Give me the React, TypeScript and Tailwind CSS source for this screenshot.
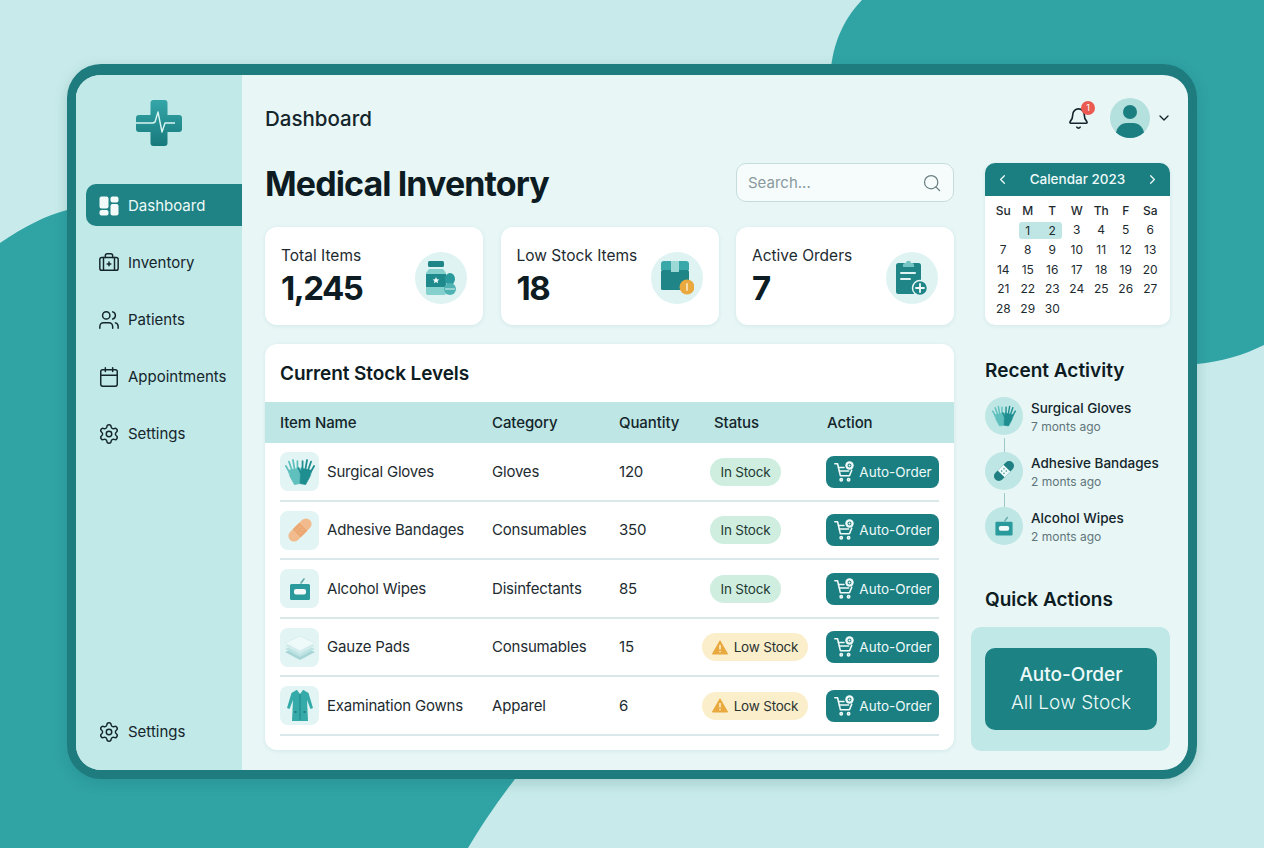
import { Bell, BriefcaseMedical, Calendar, ChevronDown, ChevronLeft, ChevronRight, Search, Settings, Users } from 'lucide-react';
import type { ReactNode } from 'react';

function Logo() {
  return (
    <svg width="46" height="46" viewBox="0 0 46 46" fill="none">
      <defs>
        <linearGradient id="logoFill" x1="0" y1="0" x2="0" y2="1">
          <stop offset="0" stopColor="#35a6a8" />
          <stop offset="1" stopColor="#17797c" />
        </linearGradient>
      </defs>
      <path
        d="M14.5 3a3 3 0 0 1 3-3h11a3 3 0 0 1 3 3v12H43a3 3 0 0 1 3 3v11a3 3 0 0 1-3 3H31.500v11a3 3 0 0 1-3 3h-11a3 3 0 0 1-3-3V32H3a3 3 0 0 1-3-3V18a3 3 0 0 1 3-3h11.500z"
        fill="url(#logoFill)"
      />
      <path d="M0 23h17l2-1 3-10 4 20 3-9h10" stroke="#d9f5f3" strokeWidth="1.4" strokeLinejoin="round" />
    </svg>
  );
}

function DashboardIcon() {
  return (
    <svg width="20" height="20" viewBox="0 0 20 20" fill="#f2fbfa">
      <rect x="0.500" y="0.500" width="9" height="12" rx="2" />
      <rect x="11.500" y="0.500" width="8" height="6" rx="2" />
      <rect x="0.500" y="14" width="9" height="5.500" rx="2" />
      <rect x="11.500" y="8" width="8" height="11.500" rx="2" />
    </svg>
  );
}

function GlovesIcon({ size = 28 }: { size?: number }) {
  const hand = (color: string, transform: string) => (
    <g stroke={color} strokeWidth="1.900" strokeLinecap="round" fill={color} transform={transform}>
      <path d="M5 15 2.500 8M8 13 6.500 4M11 13V3M14 14l1.500-9M15 18l3.500-5" fill="none" />
      <path d="M4.500 13h10.500l.500 6-1.500 10H8L5 20z" strokeWidth="0.800" />
    </g>
  );
  return (
    <svg width={size} height={size} viewBox="0 0 32 32">
      {hand('#5fc0be', 'translate(2 0) rotate(-10 10 29)')}
      {hand('#1f8e90', 'translate(30 0) scale(-1 1) rotate(-10 10 29)')}
    </svg>
  );
}

function BandageIcon({ size = 30, body = '#f2bb8d', pad = '#eba873' }: { size?: number; body?: string; pad?: string }) {
  return (
    <svg width={size} height={size} viewBox="0 0 32 32">
      <g transform="rotate(-45 16 16)">
        <rect x="1" y="10" width="30" height="12" rx="6" fill={body} />
        <rect x="11" y="10" width="10" height="12" fill={pad} />
        <circle cx="14" cy="14" r="0.800" fill={body} />
        <circle cx="18" cy="14" r="0.800" fill={body} />
        <circle cx="14" cy="18" r="0.800" fill={body} />
        <circle cx="18" cy="18" r="0.800" fill={body} />
      </g>
    </svg>
  );
}

function WipesIcon({ size = 28 }: { size?: number }) {
  return (
    <svg width={size} height={size} viewBox="0 0 28 28" fill="none">
      <path d="M15 8l3-4" stroke="#5fa8a8" strokeWidth="1.600" strokeLinecap="round" />
      <rect x="4" y="9" width="20" height="16" rx="1.500" fill="#2b9a9c" />
      <rect x="8" y="14" width="12" height="5.500" rx="2" fill="#f2fbfa" />
    </svg>
  );
}

function GauzeIcon() {
  return (
    <svg width="32" height="32" viewBox="0 0 32 32">
      <path d="M16 15 31 21 16 29 1 21z" fill="#a7d5d6" />
      <path d="M16 12 31 18 16 26 1 18z" fill="#bfe2e3" />
      <path d="M16 9 31 15 16 23 1 15z" fill="#d0ecec" />
      <path d="M16 5 31 12 16 20 1 12z" fill="#eef9f9" stroke="#cfe6e6" strokeWidth="0.500" />
    </svg>
  );
}

function GownIcon() {
  return (
    <svg width="28" height="34" viewBox="0 0 28 34">
      <path d="M10.500 1h7l5 3 4.500 15-2.500 1-3.500-9 1 21H6l1-21-3.500 9L1 19 5.500 4z" fill="#35aaa9" />
      <path d="M11 1l3 4 3-4z" fill="#e2f4f3" />
      <path d="M14 5v26" stroke="#1c8284" strokeWidth="0.800" />
      <path d="M8.500 23h2M17.500 23h2" stroke="#1c6f72" strokeWidth="1.300" />
    </svg>
  );
}

function BottleIcon() {
  return (
    <svg width="34" height="36" viewBox="0 0 34 36">
      <rect x="4" y="1" width="16" height="6" rx="1.500" fill="#1f8587" />
      <path d="M5 9h14l3 4v20a2 2 0 0 1-2 2H4a2 2 0 0 1-2-2V13z" fill="#83d0cd" />
      <rect x="2" y="14" width="20" height="13" fill="#1f8a8c" />
      <path d="M12 17l1 2.200 2.300.2-1.700 1.500.5 2.300-2.100-1.200-2.100 1.200.5-2.300-1.700-1.500 2.300-.2z" fill="#eef9f9" />
      <ellipse cx="26" cy="19" rx="5" ry="6" fill="#2b9a9c" />
      <ellipse cx="26" cy="29" rx="6" ry="6" fill="#4fb3b3" />
      <path d="M21 29h10" stroke="#d7f1f0" strokeWidth="1" />
    </svg>
  );
}

function BoxIcon() {
  return (
    <svg width="34" height="36" viewBox="0 0 34 36">
      <path d="M4 1h22a3 3 0 0 1 3 3v6H1V4a3 3 0 0 1 3-3z" fill="#3aa7a8" />
      <rect x="1" y="10" width="28" height="20" rx="1.500" fill="#1f8587" />
      <rect x="11" y="1" width="8" height="11" fill="#9bd8d6" />
      <circle cx="27" cy="27" r="7.500" fill="#e9a93f" />
      <rect x="26.200" y="23" width="1.600" height="8" rx="0.800" fill="#fbe9c2" />
    </svg>
  );
}

function ClipboardIcon() {
  return (
    <svg width="34" height="38" viewBox="0 0 34 38">
      <rect x="1" y="4" width="25" height="31" rx="2.500" fill="#1f8587" />
      <path d="M8 6c0-2 2-2 3-2 0-3 5-3 5 0 1 0 3 0 3 2v2H8z" fill="#74c5c4" />
      <path d="M6 14h14M6 20h9" stroke="#dff4f3" strokeWidth="2" strokeLinecap="round" />
      <circle cx="25" cy="29" r="7.500" fill="#1f8587" stroke="#e2f4f3" strokeWidth="1.500" />
      <path d="M25 25v8M21 29h8" stroke="#f2fbfa" strokeWidth="1.800" strokeLinecap="round" />
    </svg>
  );
}

function CartIcon() {
  return (
    <svg width="22" height="22" viewBox="0 0 24 24" fill="none" stroke="#f2fbfa" strokeWidth="1.700" strokeLinecap="round" strokeLinejoin="round">
      <path d="M2 3h3l3 13h10l2.400-6" />
      <path d="M6 7h6M7 11h10" />
      <circle cx="9" cy="20.500" r="1.300" />
      <circle cx="17" cy="20.500" r="1.300" />
      <circle cx="18" cy="5" r="4.600" fill="#f2fbfa" stroke="none" />
      <circle cx="18" cy="5" r="1.600" fill="none" stroke="#1b7f82" strokeWidth="1.100" />
    </svg>
  );
}

function WarnIcon() {
  return (
    <svg width="16" height="15" viewBox="0 0 16 15">
      <path d="M8 .8 15.600 14H.4z" fill="#e9a93f" stroke="#e9a93f" strokeLinejoin="round" />
      <path d="M8 5v4.500M8 11v1.200" stroke="#fff6de" strokeWidth="1.400" />
    </svg>
  );
}

const navItems: { label: string; icon: ReactNode }[] = [
  { label: 'Inventory', icon: <BriefcaseMedical size={22} strokeWidth={1.6} /> },
  { label: 'Patients', icon: <Users size={22} strokeWidth={1.6} /> },
  { label: 'Appointments', icon: <Calendar size={22} strokeWidth={1.6} /> },
  { label: 'Settings', icon: <Settings size={22} strokeWidth={1.6} /> },
];

const stats: { label: string; value: string; icon: ReactNode }[] = [
  { label: 'Total Items', value: '1,245', icon: <BottleIcon /> },
  { label: 'Low Stock Items', value: '18', icon: <BoxIcon /> },
  { label: 'Active Orders', value: '7', icon: <ClipboardIcon /> },
];

const stock: { name: string; category: string; quantity: number; low: boolean; icon: ReactNode }[] = [
  { name: 'Surgical Gloves', category: 'Gloves', quantity: 120, low: false, icon: <GlovesIcon size={30} /> },
  { name: 'Adhesive Bandages', category: 'Consumables', quantity: 350, low: false, icon: <BandageIcon /> },
  { name: 'Alcohol Wipes', category: 'Disinfectants', quantity: 85, low: false, icon: <WipesIcon /> },
  { name: 'Gauze Pads', category: 'Consumables', quantity: 15, low: true, icon: <GauzeIcon /> },
  { name: 'Examination Gowns', category: 'Apparel', quantity: 6, low: true, icon: <GownIcon /> },
];

const activity: { name: string; when: string; icon: ReactNode }[] = [
  { name: 'Surgical Gloves', when: '7 monts ago', icon: <GlovesIcon size={24} /> },
  { name: 'Adhesive Bandages', when: '2 monts ago', icon: <BandageIcon size={26} body="#1f7f82" pad="#eef9f9" /> },
  { name: 'Alcohol Wipes', when: '2 monts ago', icon: <WipesIcon size={24} /> },
];

const dayHeads = ['Su', 'M', 'T', 'W', 'Th', 'F', 'Sa'];
const days = Array.from({ length: 30 }, (_, i) => i + 1);

function StatCard({ label, value, icon }: { label: string; value: string; icon: ReactNode }) {
  return (
    <div className="flex h-[98px] w-[218px] items-center justify-between rounded-xl bg-white pl-4 pr-4 shadow-[0_1px_4px_rgba(30,110,110,0.1)]">
      <div className="pt-[1px]">
        <p className="text-[15.5px] leading-5 text-[#1d2b30]">{label}</p>
        <p className="mt-[2px] text-[33px] font-bold leading-[40px] tracking-[-1.5px] text-[#0d1b22]">{value}</p>
      </div>
      <div className="mt-1 flex h-[52px] w-[52px] items-center justify-center rounded-full bg-[#def3f2]">{icon}</div>
    </div>
  );
}

function StockRow({ name, category, quantity, low, icon }: (typeof stock)[number]) {
  return (
    <div className="mx-[15px] grid h-[58.5px] grid-cols-[212px_127px_95px_113px_1fr] items-center border-b-2 border-[#dbe8ea] pt-[1px] text-[15px] tracking-[-0.2px] text-[#1d2b30]">
      <div className="flex items-center gap-2">
        <div className="flex h-[39px] w-[39px] items-center justify-center rounded-lg bg-[#e2f4f3]">{icon}</div>
        <span>{name}</span>
      </div>
      <span>{category}</span>
      <span>{quantity}</span>
      <div>
        {low ? (
          <span className="-ml-3 inline-flex h-[28px] w-[106px] items-center justify-center gap-[6px] rounded-full bg-[#fbeecb] text-[13.5px] text-[#2a3330]">
            <WarnIcon />
            Low Stock
          </span>
        ) : (
          <span className="-ml-1 inline-flex h-[28px] w-[71px] items-center justify-center rounded-full bg-[#cfeee0] text-[13.5px] text-[#1f3a32]">
            In Stock
          </span>
        )}
      </div>
      <button type="button" className="-ml-px flex h-[32px] w-[113px] items-center justify-center gap-[4px] rounded-lg bg-[#1b7f82] text-[13.5px] tracking-normal text-[#eefaf9]">
        <CartIcon />
        Auto-Order
      </button>
    </div>
  );
}

function CalendarCard() {
  return (
    <div className="h-[162px] overflow-hidden rounded-[10px] bg-white shadow-[0_1px_4px_rgba(30,110,110,0.1)]">
      <div className="flex h-[33px] items-center justify-between bg-[#1b7f82] px-[10px] text-[#eefaf9]">
        <ChevronLeft size={15} />
        <span className="text-[13.5px] font-medium">Calendar 2023</span>
        <ChevronRight size={15} />
      </div>
      <div className="grid grid-cols-[repeat(7,24.5px)] auto-rows-[19.6px] items-center px-[6px] pt-[5px] text-center text-[12px] text-[#1d2b30]">
        {dayHeads.map((head) => (
          <span key={head} className="font-medium">
            {head}
          </span>
        ))}
        <span />
        {days.map((day) => (
          <span
            key={day}
            className={
              day === 1
                ? 'ml-[3px] rounded-l-[3px] bg-[#bfe6e5] pr-[3px] leading-[17px]'
                : day === 2
                  ? 'mr-[3px] rounded-r-[3px] bg-[#bfe6e5] pl-[3px] leading-[17px]'
                  : ''
            }
          >
            {day}
          </span>
        ))}
      </div>
    </div>
  );
}

export default function App() {
  return (
    <div className="relative h-[848px] w-[1264px] overflow-hidden bg-[#c8eaea] pl-[67px] pt-[64px] font-['Inter',sans-serif]">
      <svg className="absolute left-0 top-0" width="1264" height="848" viewBox="0 0 1264 848">
        <path d="M862 0C838 25 826 60 832 100L1197 364C1220 362 1244 355 1264 345V0Z" fill="#30a3a5" />
        <path d="M0 243C25 226 45 216 67 210L560 700L515 779C495 805 480 828 468 848H0Z" fill="#30a3a5" />
      </svg>
      <div className="relative h-[715px] w-[1130px] overflow-hidden rounded-[34px] border-x-[9px] border-b-[9px] border-t-[11px] border-[#1f7c7e] bg-[#e8f6f6] shadow-[0_4px_14px_rgba(20,90,90,0.2)]">
        <div className="flex h-full">
          <aside className="flex w-[166px] shrink-0 flex-col bg-[#c1e9e8] pb-[17px] pl-[10px] text-[#14252b]">
            <div className="-ml-[10px] flex h-[109px] items-center justify-center pb-[13px]">
              <Logo />
            </div>
            <div className="flex h-[42px] items-center gap-[9px] rounded-l-[10px] bg-[#1f8284] pl-[13px] pt-[1px] text-[15px] text-[#eefaf9]">
              <DashboardIcon />
              <span className="pt-[1px]">Dashboard</span>
            </div>
            <nav className="mt-[8px] flex flex-col">
              {navItems.map((item) => (
                <div key={item.label} className="flex h-[57px] items-center gap-[8px] pl-[12px] text-[15px]">
                  {item.icon}
                  <span className="pt-[1px]">{item.label}</span>
                </div>
              ))}
            </nav>
            <div className="mt-auto flex h-[42px] items-center gap-[8px] pl-[12px] text-[15px]">
              <Settings size={22} strokeWidth={1.6} />
              <span className="pt-[1px]">Settings</span>
            </div>
          </aside>

          <main className="flex min-w-0 flex-1 flex-col pl-[23px] pr-[19px]">
            <header className="-mr-[3px] flex h-[88px] shrink-0 items-center justify-between pb-[2px]">
              <h1 className="pt-[2px] text-[20.5px] font-medium text-[#14252b]">Dashboard</h1>
              <div className="flex items-center text-[#14252b]">
                <div className="relative mr-[20px]">
                  <Bell size={23} strokeWidth={1.7} />
                  <span className="absolute -right-[5px] -top-[6px] flex h-[14px] w-[14px] items-center justify-center rounded-full bg-[#ea5a50] text-[9px] text-white">
                    1
                  </span>
                </div>
                <div className="relative h-[40px] w-[40px] overflow-hidden rounded-full bg-[#b4e0de]">
                  <span className="absolute left-[13px] top-[7px] h-[14px] w-[14px] rounded-full bg-[#1b7f82]" />
                  <span className="absolute left-[6px] top-[25px] h-[22px] w-[28px] rounded-full bg-[#1b7f82]" />
                </div>
                <ChevronDown size={16} strokeWidth={2} className="ml-[6px]" />
              </div>
            </header>

            <div className="flex flex-1 gap-[31px]">
              <div className="w-[689px] shrink-0">
                <div className="flex h-[39px] items-center justify-between">
                  <h2 className="pt-[2px] text-[34px] font-bold tracking-[-0.9px] text-[#0d1b22]">Medical Inventory</h2>
                  <div className="flex h-[39px] w-[218px] items-center justify-between rounded-[10px] border border-[#c6dcdc] bg-[#f6fcfc] pl-[11px] pr-[11px]">
                    <span className="pt-[2px] text-[15px] text-[#8a9a9e]">Search...</span>
                    <Search size={20} strokeWidth={1.5} className="text-[#6c7f83]" />
                  </div>
                </div>

                <div className="mt-[25px] flex justify-between">
                  {stats.map((stat) => (
                    <StatCard key={stat.label} {...stat} />
                  ))}
                </div>

                <section className="mt-[19px] h-[406px] overflow-hidden rounded-xl bg-white shadow-[0_1px_4px_rgba(30,110,110,0.1)]">
                  <h3 className="flex h-[58px] items-center pl-[15px] pt-[2px] text-[19px] font-semibold tracking-[-0.1px] text-[#0d1b22]">Current Stock Levels</h3>
                  <div className="grid h-[41px] grid-cols-[212px_127px_95px_113px_1fr] items-center bg-[#bde6e4] px-[15px] pt-[2px] text-[15px] font-medium tracking-[-0.1px] text-[#14252b]">
                    <span>Item Name</span>
                    <span>Category</span>
                    <span>Quantity</span>
                    <span>Status</span>
                    <span>Action</span>
                  </div>
                  {stock.map((item) => (
                    <StockRow key={item.name} {...item} />
                  ))}
                </section>
              </div>

              <div className="w-[185px] shrink-0">
                <CalendarCard />
                <h3 className="mt-[32px] text-[19px] font-semibold leading-7 text-[#0d1b22]">Recent Activity</h3>
                <ul className="mt-[12px]">
                  {activity.map((item, index) => (
                    <li key={item.name} className="flex h-[55px] gap-[8px]">
                      <div className="flex w-[38px] shrink-0 flex-col items-center">
                        <div className="flex h-[38px] w-[38px] items-center justify-center rounded-full bg-[#bde6e4]">{item.icon}</div>
                        {index < activity.length - 1 ? <span className="mt-[3px] h-[14px] w-[1px] bg-[#9fc9c9]" /> : null}
                      </div>
                      <div className="pt-[1px]">
                        <p className="text-[13.5px] font-medium leading-[20px] text-[#14252b]">{item.name}</p>
                        <p className="text-[12px] leading-[18px] text-[#60757a]">{item.when}</p>
                      </div>
                    </li>
                  ))}
                </ul>
                <h3 className="mt-[24px] text-[19px] font-semibold leading-7 text-[#0d1b22]">Quick Actions</h3>
                <div className="-ml-[14px] mt-[13px] h-[124px] w-[199px] rounded-[10px] bg-[#c0e8e6] pl-[14px] pt-[21px]">
                  <button
                    type="button"
                    className="flex h-[82px] w-[172px] flex-col items-center justify-center rounded-[10px] bg-[#1c8284] text-[#eefaf9]"
                  >
                    <span className="text-[19px] font-medium leading-[28px]">Auto-Order</span>
                    <span className="text-[19px] font-light leading-[28px] tracking-[0.1px]">All Low Stock</span>
                  </button>
                </div>
              </div>
            </div>
          </main>
        </div>
      </div>
    </div>
  );
}
